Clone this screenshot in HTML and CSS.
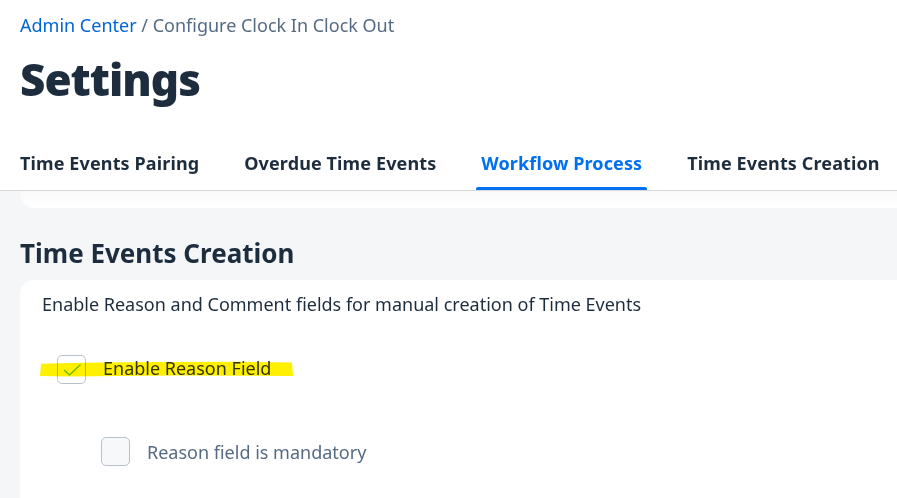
FILE: index.html
```html
<!DOCTYPE html>
<html lang="en">
<head>
<meta charset="utf-8">
<title>Settings</title>
<link rel="stylesheet" href="styles.css">
</head>
<body>
<header class="header">
  <nav class="breadcrumb"><a class="crumb-link" href="#">Admin Center</a> / Configure Clock In Clock Out</nav>
  <h1 class="title">Settings</h1>
  <div class="tabs">
    <div class="tab">Time Events Pairing</div>
    <div class="tab">Overdue Time Events</div>
    <div class="tab tab-active">Workflow Process</div>
    <div class="tab">Time Events Creation</div>
  </div>
</header>
<main class="content">
  <div class="prev-card"></div>
  <h2 class="section-title">Time Events Creation</h2>
  <section class="card">
    <p class="card-desc">Enable Reason and Comment fields for manual creation of Time Events</p>
    <div class="option option-main">
      <span class="box box-checked">
        <svg class="check" viewBox="0 0 20 20" width="20" height="20"><path d="M2.5 10.5 L7.5 15 L18 5" fill="none" stroke="#74c52a" stroke-width="1.5" stroke-linecap="round" stroke-linejoin="round"/></svg>
      </span>
      <span class="label label-up">Enable Reason Field</span>
      <svg class="highlight" viewBox="0 0 254 17" width="254" height="16" preserveAspectRatio="none"><path d="M1 3 L20 2.5 L60 1.5 L120 1 L200 0.8 L252 1.5 L253 16 L200 15.6 L140 15.5 L80 16 L30 16.5 L0 16 Z" fill="#fff000"/></svg>
    </div>
    <div class="option option-sub">
      <span class="box box-empty"></span>
      <span class="label label-muted">Reason field is mandatory</span>
    </div>
  </section>
</main>
</body>
</html>
```

FILE: styles.css
```css
* { box-sizing: border-box; }
html, body { margin: 0; padding: 0; }
body {
  font-family: "Noto Sans", "Open Sans", sans-serif;
  color: #1d2d3e;
  background: #ffffff;
  width: 897px;
  height: 498px;
  overflow: hidden;
}
.header {
  padding: 0 0 0 20px;
  border-bottom: 1px solid #d9dadc;
  background: #fff;
}
.breadcrumb {
  padding-top: 13px;
  font-size: 18px;
  line-height: 24px;
  color: #556b82;
}
.crumb-link { color: #0064d9; text-decoration: none; }
.title {
  margin: 12px 0 0;
  font-size: 44px;
  line-height: 60px;
  font-weight: 900;
  color: #1d2d3e;
  letter-spacing: -1px;
}
.tabs {
  display: flex;
  gap: 45px;
  margin-top: 42px;
}
.tab {
  position: relative;
  font-size: 18px;
  font-weight: 700;
  line-height: 24px;
  letter-spacing: 0.12px;
  padding-bottom: 15px;
  color: #1d2d3e;
}
.tab-active { color: #0070f2; }
.tab-active::after {
  content: "";
  position: absolute;
  left: -5px;
  right: -5px;
  bottom: 0;
  height: 3px;
  background: #0070f2;
  border-radius: 2px 2px 0 0;
}
.content {
  background: #f5f6f7;
  padding-left: 20px;
  height: 307px;
  overflow: hidden;
}
.prev-card {
  height: 17px;
  background: linear-gradient(#f9f9fa, #ffffff);
  border-bottom-left-radius: 14px;
}
.section-title {
  margin: 0;
  padding-top: 28px;
  font-size: 26px;
  line-height: 34px;
  font-weight: 700;
  color: #1d2d3e;
}
.card {
  margin-top: 10px;
  background: #fff;
  border-top-left-radius: 14px;
  padding: 12px 0 0 22px;
  height: 218px;
}
.card-desc {
  margin: 0;
  font-size: 18px;
  line-height: 24px;
  color: #1d2d3e;
}
.option {
  position: relative;
  display: flex;
  align-items: center;
  gap: 17px;
}
.option-main { margin-top: 39px; padding-left: 15px; }
.option-sub { margin-top: 53px; padding-left: 59px; }
.box {
  width: 29px;
  height: 29px;
  border-radius: 5px;
  border: 1px solid #b8c2cc;
  display: flex;
  align-items: center;
  justify-content: center;
  flex: none;
}
.box-checked { background: #fff; }
.box-empty { background: #f7f8f9; }
.check { display: block; margin-top: 1px; }
.label {
  font-size: 18px;
  line-height: 24px;
  color: #32363a;
}
.label-up { padding-bottom: 3px; }
.label-muted { color: #556b82; }
.highlight {
  position: absolute;
  left: -2px;
  top: 6px;
  mix-blend-mode: multiply;
  pointer-events: none;
}
```
